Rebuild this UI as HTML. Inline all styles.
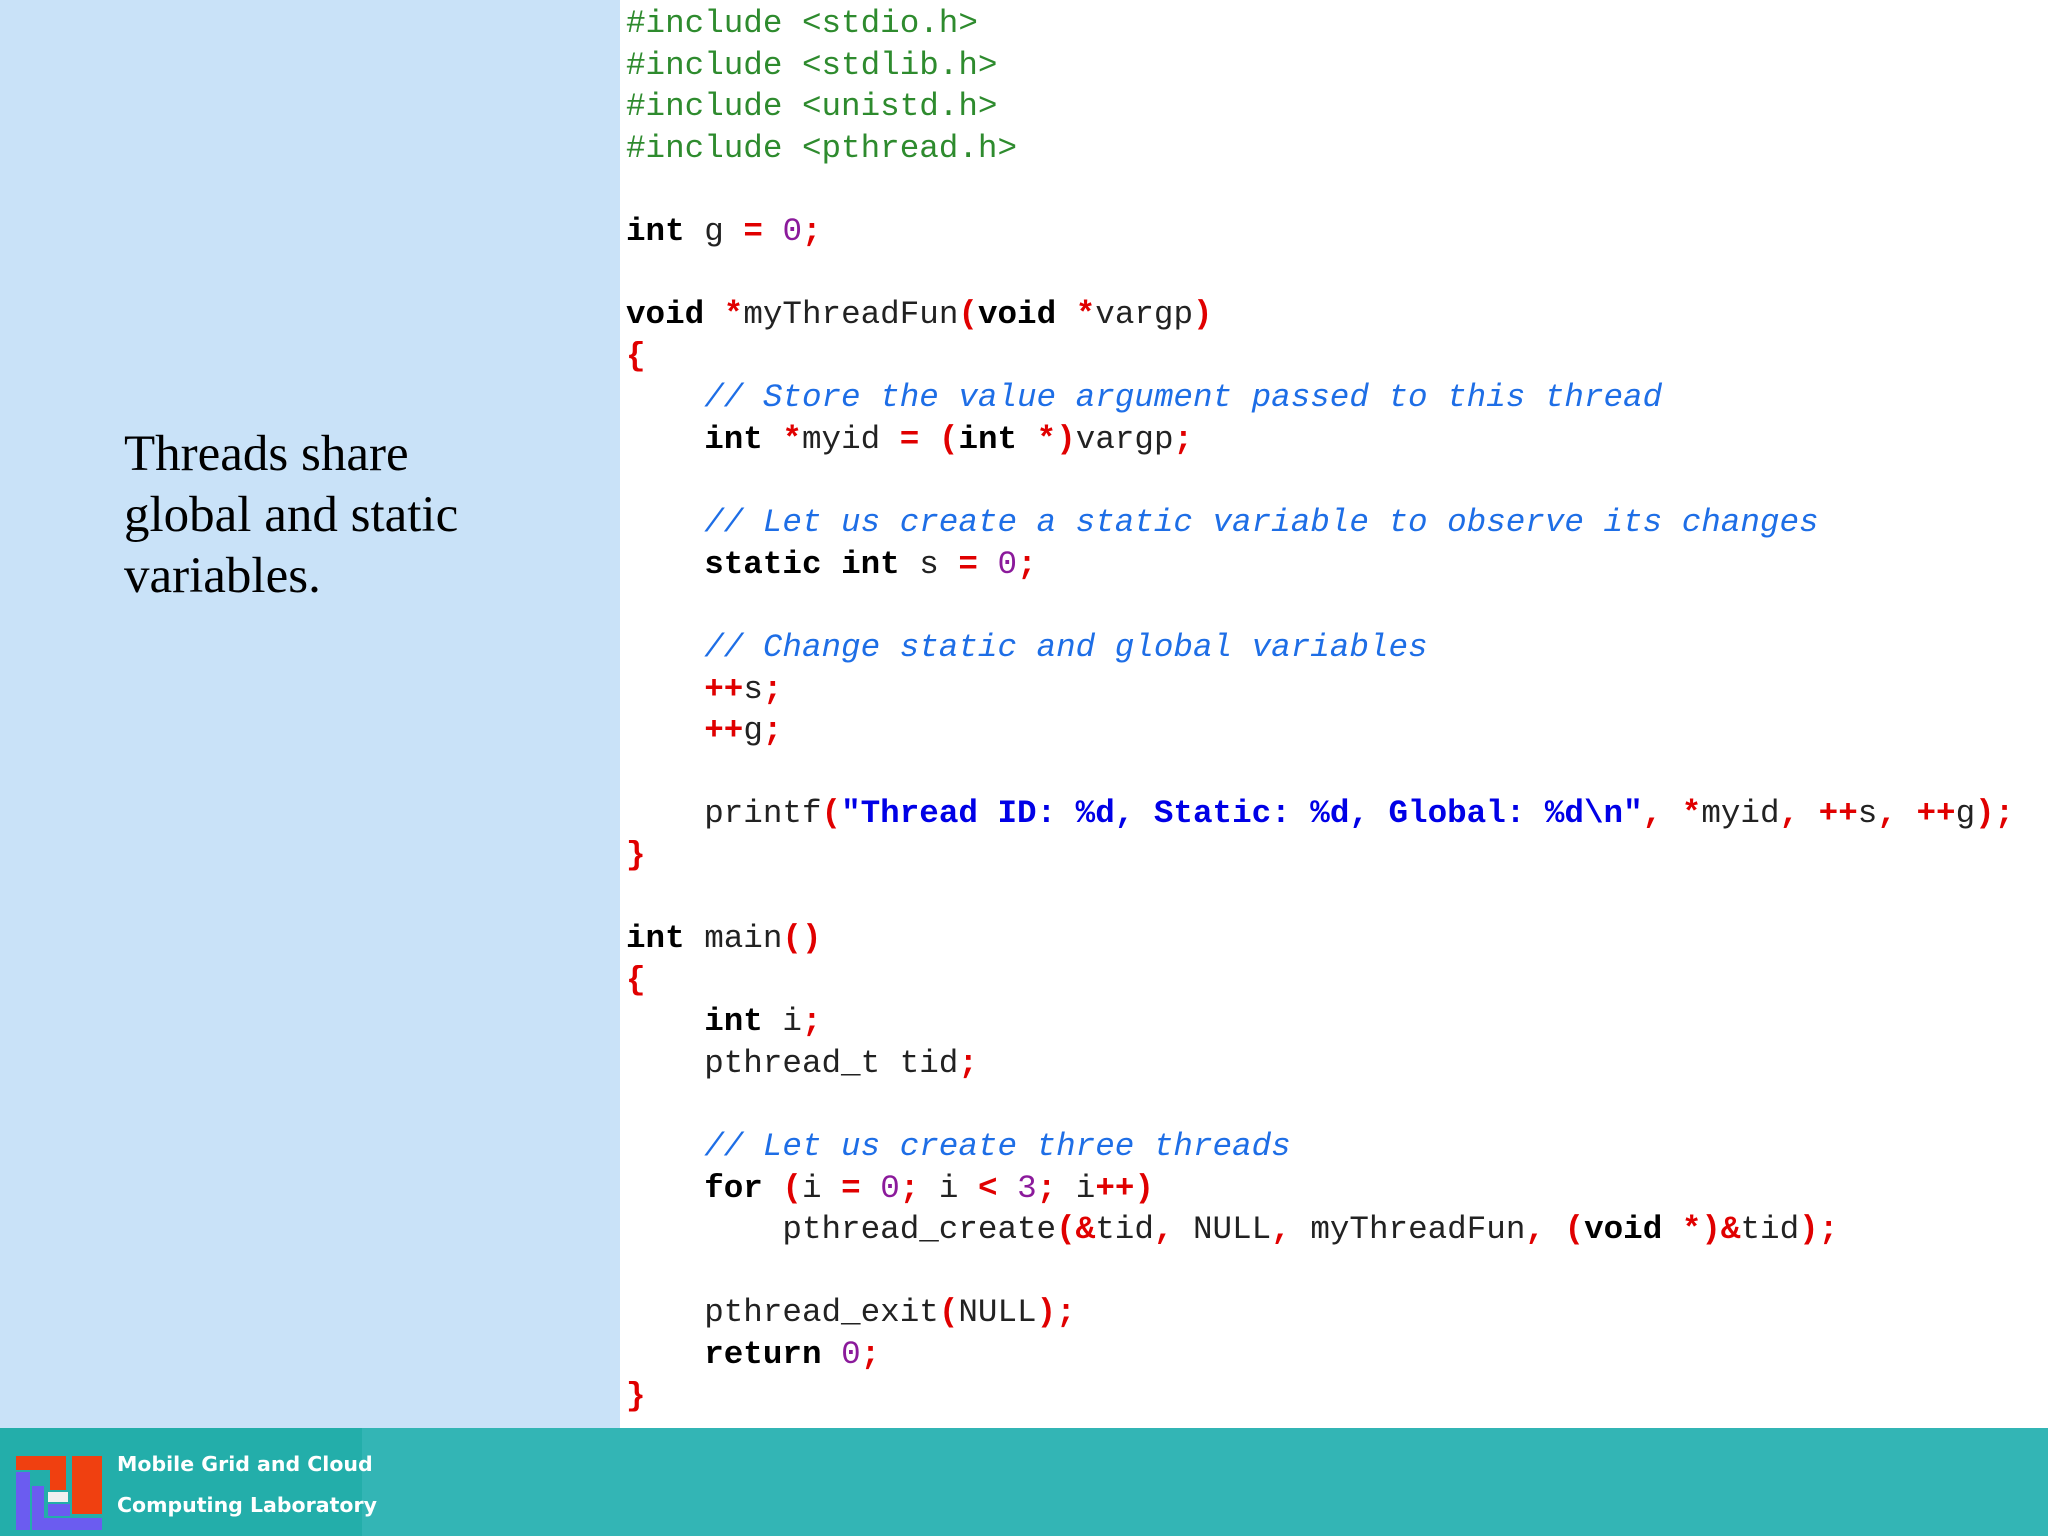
<!DOCTYPE html>
<html><head><meta charset="utf-8"><style>
html,body{margin:0;padding:0;}
body{width:2048px;height:1536px;position:relative;overflow:hidden;background:#c9e2f8;}
.left{position:absolute;left:124px;top:424px;font-family:"Liberation Serif",serif;font-size:51px;line-height:61px;color:#000;}
.code{position:absolute;left:620px;top:0;width:1428px;height:1428px;background:#fff;}
pre{margin:0;position:absolute;left:6px;top:3px;font-family:"Liberation Mono",monospace;font-size:32.6px;line-height:41.6px;color:#222;}
.p{color:#2e8b2e}.k{font-weight:bold;color:#000}.o{color:#e00000;font-weight:bold}.n{color:#8b1a9b}
.c{color:#1e6ee6;font-style:italic}.s{color:#0000e6;font-weight:bold}
.foot{position:absolute;left:0;top:1428px;width:2048px;height:108px;background:#33b5b5;}
.logo{position:absolute;left:0;top:0;width:362px;height:108px;background:#23aeaa;}
.lt{position:absolute;left:117px;color:#fff;font-family:"DejaVu Sans","Liberation Sans",sans-serif;font-weight:bold;font-size:20.5px;white-space:nowrap;}
</style></head><body>
<div class="left">Threads share<br>global and static<br>variables.</div>
<div class="code"><pre><span class="p">#include &lt;stdio.h&gt;</span>
<span class="p">#include &lt;stdlib.h&gt;</span>
<span class="p">#include &lt;unistd.h&gt;</span>
<span class="p">#include &lt;pthread.h&gt;</span>

<span class="k">int</span> g <span class="o">=</span> <span class="n">0</span><span class="o">;</span>

<span class="k">void</span> <span class="o">*</span>myThreadFun<span class="o">(</span><span class="k">void</span> <span class="o">*</span>vargp<span class="o">)</span>
<span class="o">{</span>
    <span class="c">// Store the value argument passed to this thread</span>
    <span class="k">int</span> <span class="o">*</span>myid <span class="o">=</span> <span class="o">(</span><span class="k">int</span> <span class="o">*)</span>vargp<span class="o">;</span>

    <span class="c">// Let us create a static variable to observe its changes</span>
    <span class="k">static</span> <span class="k">int</span> s <span class="o">=</span> <span class="n">0</span><span class="o">;</span>

    <span class="c">// Change static and global variables</span>
    <span class="o">++</span>s<span class="o">;</span>
    <span class="o">++</span>g<span class="o">;</span>

    printf<span class="o">(</span><span class="s">"Thread ID: %d, Static: %d, Global: %d\n"</span><span class="o">,</span> <span class="o">*</span>myid<span class="o">,</span> <span class="o">++</span>s<span class="o">,</span> <span class="o">++</span>g<span class="o">);</span>
<span class="o">}</span>

<span class="k">int</span> main<span class="o">()</span>
<span class="o">{</span>
    <span class="k">int</span> i<span class="o">;</span>
    pthread_t tid<span class="o">;</span>

    <span class="c">// Let us create three threads</span>
    <span class="k">for</span> <span class="o">(</span>i <span class="o">=</span> <span class="n">0</span><span class="o">;</span> i <span class="o">&lt;</span> <span class="n">3</span><span class="o">;</span> i<span class="o">++)</span>
        pthread_create<span class="o">(&amp;</span>tid<span class="o">,</span> NULL<span class="o">,</span> myThreadFun<span class="o">,</span> <span class="o">(</span><span class="k">void</span> <span class="o">*)&amp;</span>tid<span class="o">);</span>

    pthread_exit<span class="o">(</span>NULL<span class="o">);</span>
    <span class="k">return</span> <span class="n">0</span><span class="o">;</span>
<span class="o">}</span></pre></div>
<div class="foot"><div class="logo">
<svg style="position:absolute;left:16px;top:28px" width="86" height="74" viewBox="0 0 86 74">
<rect x="0" y="0" width="50" height="14" fill="#f04010"/>
<rect x="56" y="0" width="30" height="58" fill="#f04010"/>
<rect x="34" y="14" width="16" height="20" fill="#f04010"/>
<rect x="0" y="16" width="14" height="58" fill="#6b5cf0"/>
<rect x="16" y="30" width="12" height="32" fill="#6b5cf0"/>
<rect x="32" y="36" width="20" height="10" fill="#f0f0f0"/>
<rect x="32" y="48" width="22" height="12" fill="#6b5cf0"/>
<rect x="16" y="62" width="70" height="12" fill="#6b5cf0"/>
</svg>
<div class="lt" style="top:24px">Mobile Grid and Cloud</div>
<div class="lt" style="top:65px">Computing Laboratory</div>
</div></div>
</body></html>
